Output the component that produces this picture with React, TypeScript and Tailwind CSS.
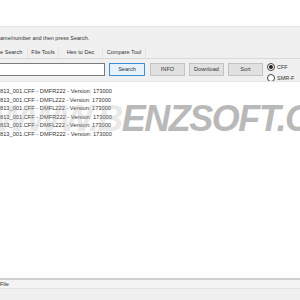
import { useState } from "react";

const ROWS = [
  "813_001.CFF - DMFR222 - Version: 173000",
  "813_001.CFF - DMFL222 - Version: 173000",
  "813_001.CFF - DMFL222 - Version: 173000",
  "813_001.CFF - DMFR222 - Version: 173000",
  "813_001.CFF - DMFL222 - Version: 173000",
  "813_001.CFF - DMFR222 - Version: 173000",
];

const TABS = [
  { label: "e Search", w: "w-[28px] justify-start" },
  { label: "File Tools", w: "w-[31px] justify-center" },
  { label: "Hex to Dec", w: "w-[44px] justify-center" },
  { label: "Compare Tool", w: "w-[43px] justify-center" },
];

function Radio({ label, checked, onClick }: { label: string; checked: boolean; onClick: () => void }) {
  return (
    <button onClick={onClick} className="flex items-center gap-[2px] h-[10px]">
      <span className="w-[8px] h-[8px] rounded-full border border-[#444] bg-white flex items-center justify-center">
        {checked && <span className="w-[4px] h-[4px] rounded-full bg-[#222]" />}
      </span>
      <span className="text-[5.5px] text-[#333]">{label}</span>
    </button>
  );
}

export default function App() {
  const [mode, setMode] = useState("CFF");

  return (
    <div className="relative w-[300px] h-[300px] overflow-hidden bg-white flex flex-col font-['Liberation_Sans',Arial,sans-serif] text-[#2a2a2a]">
      <div className="h-[26px] bg-white" />

      <div className="h-[55px] bg-[#f0f0f0] border-t border-[#e3e3e3] flex flex-col">
        <div className="pt-[8px] h-[18px] text-[5.5px] leading-[6px] whitespace-nowrap text-[#333]">
          ame/number and then press Search.
        </div>

        <div className="flex h-[15px] border-b border-[#d9d9d9] items-end">
          {TABS.map((t) => (
            <div
              key={t.label}
              className={`${t.w} h-[11px] flex items-center text-[5.6px] text-[#333] whitespace-nowrap border-r border-[#e4e4e4]`}
            >
              {t.label}
            </div>
          ))}
        </div>

        <div className="flex items-start mt-[3px] h-[19px]">
          <div className="w-[105px] h-[13px] mt-[1px] bg-white border border-l-0 border-[#7a7a7a]" />
          <button className="ml-[4px] mt-[1px] w-[36px] h-[13px] bg-[#e5f1fb] border border-[#3c8fd4] text-[5.6px] text-[#333]">Search</button>
          <button className="ml-[5px] mt-[1px] w-[35px] h-[13px] bg-[#e1e1e1] border border-[#c3c3c3] text-[5.6px] text-[#333]">INFO</button>
          <button className="ml-[4px] mt-[1px] w-[35px] h-[13px] bg-[#e1e1e1] border border-[#c3c3c3] text-[5.6px] text-[#333]">Download</button>
          <button className="ml-[4px] mt-[1px] w-[35px] h-[13px] bg-[#e1e1e1] border border-[#c3c3c3] text-[5.6px] text-[#333]">Sort</button>
          <div className="ml-[4px] flex flex-col gap-[1px]">
            <Radio label="CFF" checked={mode === "CFF"} onClick={() => setMode("CFF")} />
            <Radio label="SMR-F" checked={mode === "SMR-F"} onClick={() => setMode("SMR-F")} />
          </div>
        </div>
      </div>

      <div className="flex-1 bg-white border-t border-[#e6e6e6] pt-[5px]">
        {ROWS.map((r, i) => (
          <div key={i} className="h-[8.5px] leading-[8.5px] text-[5.7px] text-[#333] whitespace-nowrap">
            {r}
          </div>
        ))}
      </div>

      <div className="h-[22px] bg-[#f0f0f0] border-t-2 border-[#cfcfcf] flex flex-col">
        <div className="h-[9px] text-[5.5px] leading-[9px] border-b border-[#e4e4e4] bg-[#f3f3f3]">File</div>
      </div>

      <div className="absolute left-[-6px] top-[101px] text-[36px] leading-[36px] font-bold italic tracking-[-1.5px] whitespace-nowrap pointer-events-none">
        <span className="text-[#b8b8b8] opacity-30">WWW.B</span>
        <span className="text-[#a2a2a2] opacity-75">ENZSOFT.COM</span>
      </div>
    </div>
  );
}
